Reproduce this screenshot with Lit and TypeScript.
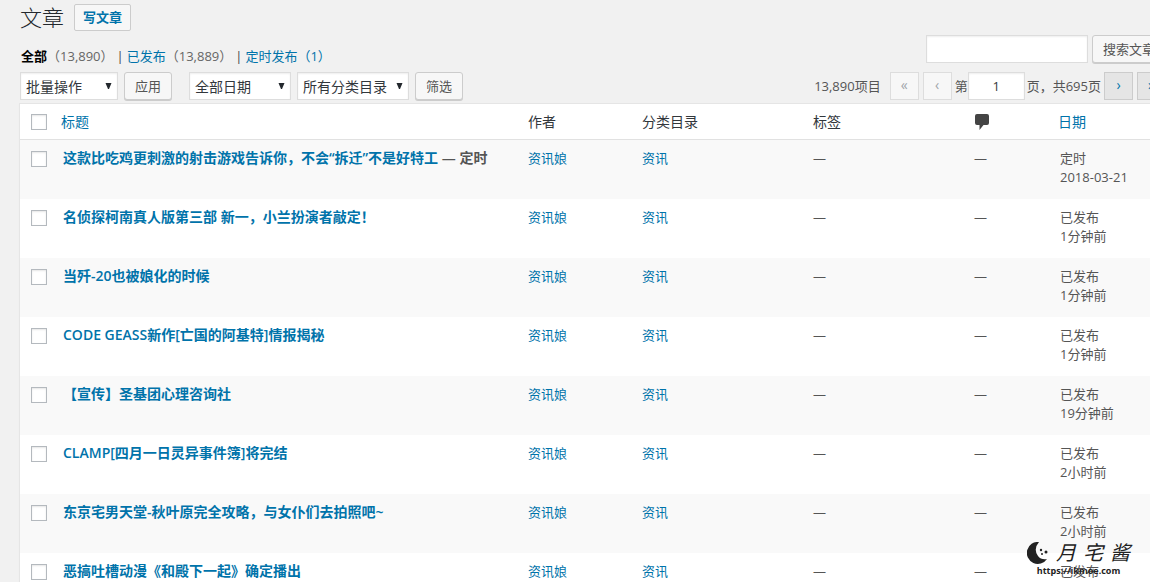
import { LitElement, html, css, nothing } from "lit";
import { customElement, property, state } from "lit/decorators.js";

interface Post {
  title: string;
  suffix?: string;
  status: string;
  when: string;
}

const POSTS: Post[] = [
  { title: "这款比吃鸡更刺激的射击游戏告诉你，不会“拆迁”不是好特工", suffix: "定时", status: "定时", when: "2018-03-21" },
  { title: "名侦探柯南真人版第三部 新一，小兰扮演者敲定！", status: "已发布", when: "1分钟前" },
  { title: "当歼-20也被娘化的时候", status: "已发布", when: "1分钟前" },
  { title: "CODE GEASS新作[亡国的阿基特]情报揭秘", status: "已发布", when: "1分钟前" },
  { title: "【宣传】圣基团心理咨询社", status: "已发布", when: "19分钟前" },
  { title: "CLAMP[四月一日灵异事件簿]将完结", status: "已发布", when: "2小时前" },
  { title: "东京宅男天堂-秋叶原完全攻略，与女仆们去拍照吧~", status: "已发布", when: "2小时前" },
  { title: "恶搞吐槽动漫《和殿下一起》确定播出", status: "已发布", when: "2小时前" },
];

const controls = css`
  * {
    box-sizing: border-box;
  }
  a {
    color: #0073aa;
    text-decoration: none;
  }
  button,
  input,
  select {
    font-family: inherit;
    margin: 0;
  }
  .button {
    height: 28px;
    padding: 0 10px;
    border: 1px solid #ccc;
    border-radius: 3px;
    background: #f7f7f7;
    box-shadow: 0 1px 0 #ccc;
    color: #555;
    font-size: 13px;
    line-height: 26px;
    white-space: nowrap;
  }
  .field {
    height: 28px;
    border: 1px solid #ddd;
    background: #fff;
    box-shadow: inset 0 1px 2px rgba(0, 0, 0, 0.07);
    color: #32373c;
  }
`;

@customElement("drop-down")
class DropDown extends LitElement {
  @property() label = "";
  @property() value = "";

  static styles = [
    controls,
    css`
      :host {
        display: grid;
      }
      .select {
        grid-area: 1 / 1;
        width: 100%;
        padding: 0 5px;
        border-radius: 0;
        appearance: none;
        font-size: 14px;
      }
      .arrow {
        grid-area: 1 / 1;
        place-self: center end;
        margin-right: 6px;
        pointer-events: none;
      }
    `,
  ];

  render() {
    return html`
      <select class="select field" aria-label=${this.label}>
        <option>${this.value}</option>
      </select>
      <svg class="arrow" width="7" height="7" viewBox="0 0 7 7" aria-hidden="true">
        <path d="M0.500 0H6.500L4 6H3Z" fill="#23282d" />
      </svg>
    `;
  }
}

@customElement("page-nav")
class PageNav extends LitElement {
  @state() private page = "1";

  static styles = [
    controls,
    css`
      :host {
        display: flex;
        align-items: center;
        color: #555;
        font-size: 13px;
        line-height: 19px;
        white-space: nowrap;
      }
      .total {
        margin-right: 9px;
      }
      .step {
        width: 29px;
        height: 28px;
        padding: 0 0 3px;
        border: 1px solid #ccc;
        background: #e5e5e5;
        color: #0073aa;
        font-size: 14px;
        line-height: 20px;
      }
      .step:disabled {
        border-color: #ddd;
        background: #f7f7f7;
        color: #a0a5aa;
      }
      .step + .step {
        margin-left: 4px;
      }
      .pages {
        display: flex;
        align-items: center;
        margin: 0 3px;
      }
      .current {
        width: 57px;
        margin-right: 2px;
        padding: 0;
        font-size: 13px;
        text-align: center;
      }
    `,
  ];

  render() {
    return html`
      <span class="total">13,890项目</span>
      <button class="step" disabled aria-label="首页">«</button>
      <button class="step" disabled aria-label="上一页">‹</button>
      <span class="pages">
        <label for="page">第</label>
        <input
          id="page"
          class="current field"
          .value=${this.page}
          @input=${(e: Event) => (this.page = (e.target as HTMLInputElement).value)}
        />
        <span>页，共695页</span>
      </span>
      <button class="step" aria-label="下一页">›</button>
      <button class="step" aria-label="尾页">»</button>
    `;
  }
}

@customElement("post-table")
class PostTable extends LitElement {
  static styles = [
    controls,
    css`
      :host {
        display: block;
      }
      .table {
        width: 100%;
        table-layout: fixed;
        border-spacing: 0;
        border: 1px solid #e5e5e5;
        background: #fff;
        box-shadow: 0 1px 1px rgba(0, 0, 0, 0.04);
        color: #555;
        font-size: 13px;
        line-height: 19px;
      }
      .col-check {
        width: 33px;
      }
      .col-author {
        width: 114px;
      }
      .col-category {
        width: 171px;
      }
      .col-tags {
        width: 161px;
      }
      .col-comments {
        width: 86px;
      }
      .col-date {
        width: 116px;
      }
      th,
      td {
        padding: 9px 10px 12px;
        text-align: left;
        vertical-align: top;
        font-weight: 400;
      }
      thead th {
        padding: 8px 10px;
        border-bottom: 1px solid #e1e1e1;
        color: #32373c;
        font-size: 14px;
      }
      thead .sortable {
        padding-left: 8px;
      }
      .row:nth-child(odd) {
        background: #f9f9f9;
      }
      thead .check,
      .check {
        padding-right: 0;
        padding-left: 11px;
      }
      .box {
        display: block;
        width: 16px;
        height: 16px;
        margin: 2px 0 0;
        border: 1px solid #b4b9be;
        background: #fff;
        box-shadow: inset 0 1px 2px rgba(0, 0, 0, 0.1);
        appearance: none;
      }
      .box:checked {
        background: #0073aa;
      }
      .title {
        padding-top: 8px;
        font-size: 14px;
        font-weight: 600;
        white-space: nowrap;
      }
      .bubble {
        display: block;
        margin-top: 2px;
      }
    `,
  ];

  private row(post: Post) {
    return html`
      <tr class="row">
        <th class="check" scope="row">
          <input class="box" type="checkbox" aria-label=${"选择" + post.title} />
        </th>
        <td class="title"><a href="#">${post.title}</a>${post.suffix ? html` — ${post.suffix}` : nothing}</td>
        <td><a href="#">资讯娘</a></td>
        <td><a href="#">资讯</a></td>
        <td>—</td>
        <td>—</td>
        <td>${post.status}<br />${post.when}</td>
      </tr>
    `;
  }

  render() {
    return html`
      <table class="table">
        <colgroup>
          <col class="col-check" />
          <col />
          <col class="col-author" />
          <col class="col-category" />
          <col class="col-tags" />
          <col class="col-comments" />
          <col class="col-date" />
        </colgroup>
        <thead>
          <tr>
            <th class="check" scope="col"><input class="box" type="checkbox" aria-label="全选" /></th>
            <th class="sortable" scope="col"><a href="#">标题</a></th>
            <th scope="col">作者</th>
            <th scope="col">分类目录</th>
            <th scope="col">标签</th>
            <th scope="col" aria-label="评论">
              <svg class="bubble" width="15" height="16" viewBox="0 0 15 16" aria-hidden="true">
                <path d="M3 0H13Q15 0 15 2V9Q15 11 13 11H9.500L5.500 16V11H3Q1 11 1 9V2Q1 0 3 0Z" fill="#444" />
              </svg>
            </th>
            <th class="sortable" scope="col"><a href="#">日期</a></th>
          </tr>
        </thead>
        <tbody>
          ${POSTS.map((post) => this.row(post))}
        </tbody>
      </table>
    `;
  }
}

@customElement("site-mark")
class SiteMark extends LitElement {
  static styles = css`
    :host {
      display: block;
      color: #222;
      pointer-events: none;
    }
    .name {
      display: flex;
      align-items: center;
      justify-content: space-between;
      font-size: 20px;
      font-style: italic;
      line-height: 24px;
    }
    .url {
      font-size: 9px;
      font-weight: 700;
      line-height: 12px;
      text-align: center;
    }
  `;

  render() {
    return html`
      <div class="name">
        <svg width="22" height="22" viewBox="0 0 22 22" aria-hidden="true">
          <path d="M12 0A11 11 0 1 0 20 17Q14 18 11 14Q6 7 12 0Z" fill="#222" />
          <circle cx="14" cy="8" r="1.200" fill="#222" />
          <circle cx="19" cy="10" r="1.500" fill="#222" />
          <circle cx="15" cy="12" r="1" fill="#222" />
        </svg>
        <span>月</span><span>宅</span><span>酱</span>
      </div>
      <div class="url">https://ikmoe.com</div>
    `;
  }
}

@customElement("app-root")
class AppRoot extends LitElement {
  static styles = [
    controls,
    css`
      :host {
        display: block;
        position: relative;
        height: 100vh;
        overflow: hidden;
        background: #f1f1f1;
        color: #444;
        font-family: "Open Sans", "Noto Sans CJK SC", sans-serif;
        font-size: 13px;
        line-height: 19px;
      }
      .page {
        margin: 0 -17px 0 19px;
        padding-top: 4px;
      }
      .bar {
        display: flex;
        align-items: center;
        padding: 0 1px;
      }
      .heading {
        margin: 0 10px 0 0;
        color: #23282d;
        font-size: 22px;
        font-weight: 300;
        line-height: 27px;
      }
      .add {
        height: 27px;
        padding: 0 8px;
        border: 1px solid #ccc;
        border-radius: 2px;
        background: #f7f7f7;
        font-weight: 600;
        line-height: 25px;
      }
      .top {
        justify-content: space-between;
        margin-top: 4px;
        height: 28px;
      }
      .views {
        display: flex;
        gap: 3px;
        align-self: flex-end;
        margin: 0 0 -3px 1px;
        padding: 0;
        list-style: none;
        white-space: nowrap;
      }
      .views li + li::before {
        content: "|";
        margin-right: 3px;
      }
      .views .active {
        color: #000;
        font-weight: 600;
      }
      .count {
        color: #666;
      }
      .search {
        display: flex;
        gap: 4px;
      }
      .query {
        width: 162px;
      }
      .tools {
        justify-content: space-between;
        margin: 9px 0 3px;
      }
      .filters {
        display: flex;
        gap: 6px;
      }
      .bulk {
        width: 98px;
      }
      .dates {
        width: 102px;
        margin-left: 11px;
      }
      .categories {
        width: 112px;
      }
      .mark {
        position: absolute;
        right: 20px;
        bottom: 5px;
        width: 103px;
      }
    `,
  ];

  render() {
    return html`
      <main class="page">
        <header class="bar">
          <h1 class="heading">文章</h1>
          <a class="add" href="#">写文章</a>
        </header>
        <div class="bar top">
          <ul class="views">
            <li><a class="active" href="#">全部</a><span class="count">（13,890）</span></li>
            <li><a href="#">已发布</a><span class="count">（13,889）</span></li>
            <li><a href="#">定时发布（1）</a></li>
          </ul>
          <form class="search" @submit=${(e: Event) => e.preventDefault()}>
            <input class="query field" type="search" aria-label="搜索文章" />
            <button class="button">搜索文章</button>
          </form>
        </div>
        <div class="bar tools">
          <div class="filters">
            <drop-down class="bulk" label="选择批量操作" value="批量操作"></drop-down>
            <button class="button">应用</button>
            <drop-down class="dates" label="按日期筛选" value="全部日期"></drop-down>
            <drop-down class="categories" label="按分类目录筛选" value="所有分类目录"></drop-down>
            <button class="button">筛选</button>
          </div>
          <page-nav></page-nav>
        </div>
        <post-table></post-table>
      </main>
      <site-mark class="mark"></site-mark>
    `;
  }
}
